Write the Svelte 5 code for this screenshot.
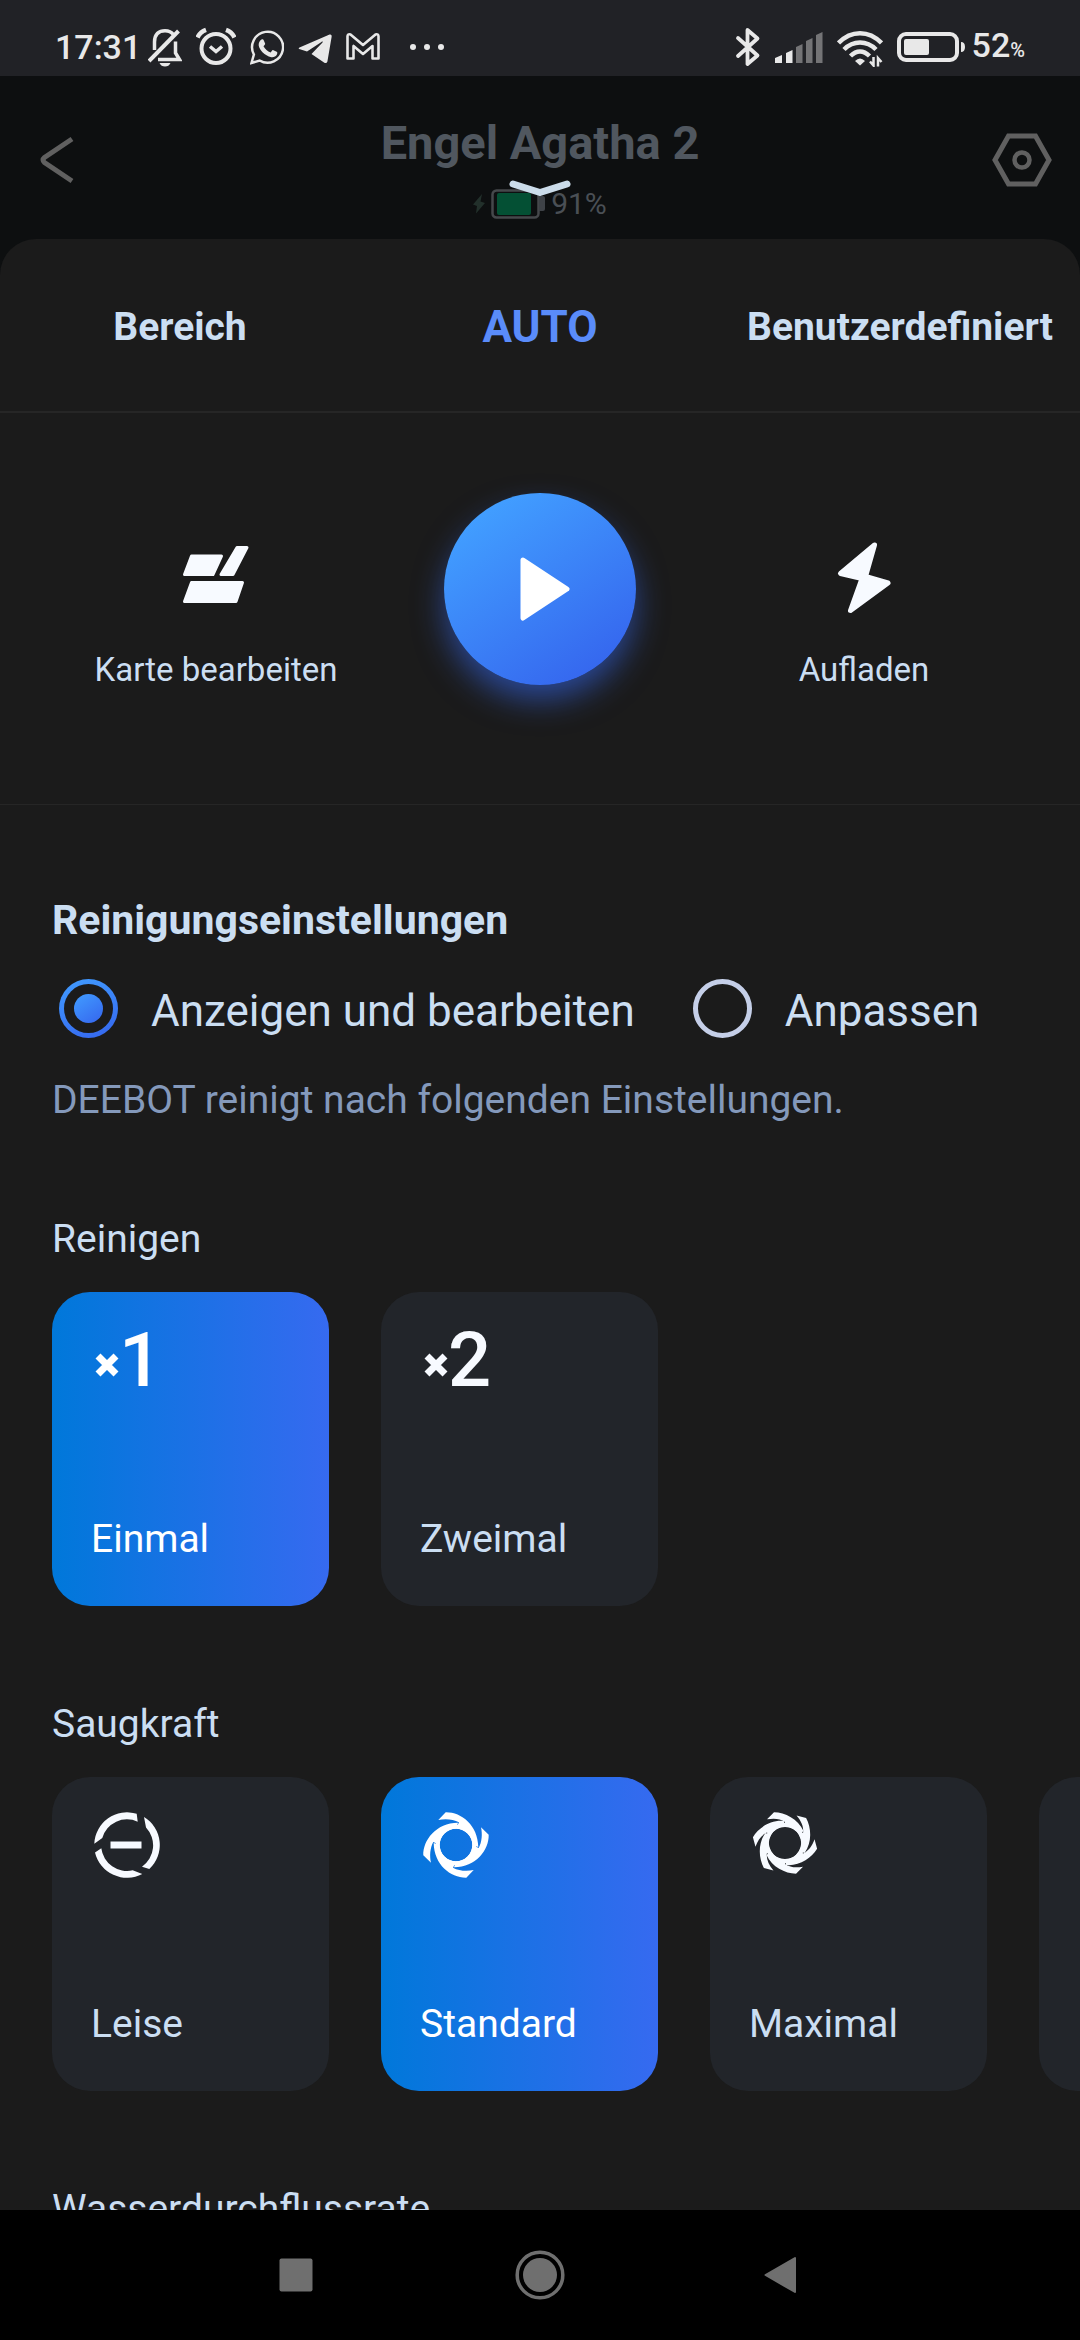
<script lang="ts">
  const tabs = [
    { id: 'area', label: 'Bereich' },
    { id: 'auto', label: 'AUTO' },
    { id: 'custom', label: 'Benutzerdefiniert' },
  ];

  const modes = [
    { id: 'edit', label: 'Anzeigen und bearbeiten' },
    { id: 'adapt', label: 'Anpassen' },
  ];

  const swirl4 = 'M-10.300 -32.700C5 -33 22 -20 22.300 2L16.300 0A16.300 16.300 0 0 0 0 -16.300L3 -22.700C-3 -26 -11 -26.500 -17.700 -25Z';
  const swirl6 = 'M-11 -30.700C0 -30.500 13 -24 18.500 -12L13.900 -8A16 16 0 0 0 0 -16L0 -21C-5 -24.500 -11 -25 -18 -23.700Z';

  const passes = [
    { id: 'once', label: 'Einmal', count: '1' },
    { id: 'twice', label: 'Zweimal', count: '2' },
  ];

  const suction = [
    { id: 'quiet', label: 'Leise', icon: 'quiet' },
    { id: 'standard', label: 'Standard', icon: 'swirl', blade: swirl4, angles: [0, 90, 180, 270], cy: 36 },
    { id: 'max', label: 'Maximal', icon: 'swirl', blade: swirl6, angles: [0, 60, 120, 180, 240, 300], cy: 34 },
  ];

  let activeTab = $state('auto');
  let mode = $state('edit');
  let pass = $state('once');
  let power = $state('standard');
</script>

<div class="screen">
  <div class="status">
    <div class="status-side">
      <span class="clock">17:31</span>
      <div class="notifications">
        <!-- muted bell -->
        <svg width="34" height="40" viewBox="0 0 34 40" fill="none" stroke="#e8e8e8" stroke-width="3.500">
          <path d="M6.500 23V15C6.500 7 11 3.700 17 3.700c3.500 0 6.500 1.300 8.300 3.800" />
          <path d="M1 34L30.500 4" stroke-width="4" />
          <path d="M10 32.500h21.500L27.500 26V14.500" />
          <path d="M11.500 36h11c-1 2.500-3 3.500-5.500 3.500s-4.500-1-5.500-3.500z" fill="#e8e8e8" stroke="none" />
        </svg>
        <!-- alarm clock -->
        <svg width="40" height="40" viewBox="0 0 40 40" fill="none" stroke="#e8e8e8" stroke-width="4">
          <circle cx="20" cy="21.500" r="14.500" />
          <path d="M14 19.500l6 5 6-5" stroke-width="3.500" />
          <path d="M1.500 10.500Q4 5 10 2.800M38.500 10.500Q36 5 30 2.800" stroke-width="4.500" />
        </svg>
        <!-- WhatsApp -->
        <svg width="34" height="40" viewBox="0 0 34 40">
          <path d="M1.500 36l2.400-8.500A15.500 15.500 0 1 1 9.600 33.500z" fill="none" stroke="#e8e8e8" stroke-width="2.500" />
          <path d="M11.500 12.500c1-.5 1.800-.3 2.200.7l1.400 3.200c.2.600-.1 1-1.600 2.800 1.600 3 4 5 7.200 6.200 1.700-2.200 2-2.500 2.700-2.200l3.300 1.600c.9.500.7 1.500.2 2.800-.9 2-3.500 3-5.600 2.600C14.500 28.500 9.500 23 8.700 18.500c-.3-2.500 1-5 2.800-6z" fill="#e8e8e8" />
        </svg>
        <!-- Telegram -->
        <svg width="34" height="40" viewBox="0 0 34 40" fill="#e8e8e8">
          <path d="M1.500 20.500L31 7.800c2-.8 3 .2 2.600 2.200L29.500 34c-.4 2-1.700 2.700-3.500 1.600L13.500 27l11-11.500c.7-.8-.1-1.200-1-.6L9 24.500l-7-2.200c-1.500-.5-1.800-1.200-.5-1.800z" />
        </svg>
        <!-- Gmail -->
        <svg width="34" height="40" viewBox="0 0 34 40" fill="none" stroke="#e8e8e8" stroke-width="2.600" stroke-linejoin="round">
          <path d="M1.500 9.500Q1.500 6.500 4.500 7.500L17 18 29.500 7.500Q32.500 6.500 32.500 9.500V31.500H26.500V19L17 27 7.500 19V31.500H1.500z" />
        </svg>
        <svg class="more" width="34" height="40" viewBox="0 0 34 40" fill="#e8e8e8">
          <circle cx="3" cy="20" r="3" /><circle cx="17" cy="20" r="3" /><circle cx="31" cy="20" r="3" />
        </svg>
      </div>
    </div>
    <div class="status-side">
      <div class="system">
        <!-- Bluetooth -->
        <svg width="26" height="40" viewBox="0 0 26 40" fill="none" stroke="#e8e8e8" stroke-width="3.800" stroke-linejoin="round" stroke-linecap="round">
          <path d="M3 11l19.500 17.500L12.500 37V3l10 8.500L3 29" />
        </svg>
        <!-- signal -->
        <svg width="48" height="40" viewBox="0 0 48 40" fill="#e8e8e8">
          <path d="M0 31l7-3v8H0zM11 26l6.500-3v13H11z" />
          <path d="M21 20l6.500-3v19H21zM31 14l6.500-3v25H31zM41 8l6.500-3v31H41z" fill="#747476" />
        </svg>
        <!-- wifi -->
        <svg width="46" height="40" viewBox="0 0 46 40" fill="none" stroke="#e8e8e8" stroke-width="4.500">
          <path d="M1.500 16Q11 6.200 23 6.200T44.500 16M7 22.500Q14 15.500 23 15.500T39 22.500M13.500 29Q18 24.500 23 24.500T32.500 29" />
          <path d="M18 34q5-5 10 0l-5 4.500z" fill="#e8e8e8" stroke="none" />
          <path d="M36.500 30v8.500l-3.500-4M41 39.500V31l3.500 4" stroke-width="2.500" />
        </svg>
        <!-- battery -->
        <svg width="68" height="40" viewBox="0 0 68 40">
          <rect x="2" y="7" width="58" height="26" rx="7" fill="none" stroke="#e8e8e8" stroke-width="4" />
          <rect x="7" y="12" width="25" height="16" rx="2" fill="#e8e8e8" />
          <path d="M64 15q4 0 4 5t-4 5z" fill="#e8e8e8" />
        </svg>
      </div>
      <span class="clock">52<small>%</small></span>
    </div>
  </div>

  <header class="header">
    <button class="back" aria-label="Zurück">
      <svg width="34" height="48" viewBox="0 0 34 48" fill="none" stroke="#606060" stroke-width="5">
        <path d="M32 3L4.500 21.500Q1.500 24 4.500 26.500L32 45" />
      </svg>
    </button>
    <div class="robot">
      <h1>Engel Agatha 2</h1>
      <div class="charge">
        <svg width="12" height="20" viewBox="0 0 12 20" fill="#22302b">
          <path d="M9 0L0 10.500l4 1.500L3 19.500 12 9 7.500 7.500z" />
        </svg>
        <svg width="54" height="30" viewBox="0 0 54 30">
          <rect x="1.500" y="1.500" width="46" height="27" rx="4" fill="none" stroke="#45484b" stroke-width="2.500" />
          <rect x="6" y="4" width="34" height="22" rx="2" fill="#045034" />
          <path d="M48 7h4q2 0 2 2v11q0 2-2 2h-4z" fill="#3e4247" />
        </svg>
        <span>91%</span>
      </div>
    </div>
    <button class="gear" aria-label="Einstellungen">
      <svg width="60" height="54" viewBox="0 0 60 54" fill="none" stroke="#606060">
        <path d="M3 27L16.500 3h27L57 27 43.500 51h-27z" stroke-width="5" />
        <circle cx="30" cy="27" r="7.500" stroke-width="4.500" />
      </svg>
    </button>
  </header>

  <main class="sheet">
    <svg class="handle" width="62" height="18" viewBox="0 0 62 18" fill="none" stroke="#cbdcea" stroke-width="7" stroke-linecap="round" stroke-linejoin="round">
      <path d="M4 4L31 12.500 58 4" />
    </svg>
    <div class="sheet-scroll">
      <nav class="tabs">
        {#each tabs as tab}
          <button class="tab" class:active={activeTab === tab.id} onclick={() => (activeTab = tab.id)}>{tab.label}</button>
        {/each}
      </nav>

      <section class="actions">
        <button class="action">
          <svg width="72" height="72" viewBox="0 0 72 72" fill="#f7faff" stroke="#f7faff" stroke-width="3" stroke-linejoin="round">
            <path d="M11.500 14h30L33 32.500H4.500z" />
            <path d="M57 5.500h10L53 32.500H41z" />
            <path d="M11.500 40.500h51L56 59.500H4.500z" />
          </svg>
          <span>Karte bearbeiten</span>
        </button>
        <button class="play" aria-label="Start">
          <svg width="50" height="64" viewBox="0 0 50 64" fill="#fff" stroke="#fff" stroke-width="5" stroke-linejoin="round">
            <path d="M3 3L47 32 3 61z" />
          </svg>
        </button>
        <button class="action">
          <svg width="72" height="72" viewBox="0 0 72 72" fill="#f7faff" stroke="#f7faff" stroke-width="5" stroke-linejoin="round">
            <path d="M46.500 3L12.500 31.500l21.500 5L22.500 68.500 60 41 37.500 34.500z" />
          </svg>
          <span>Aufladen</span>
        </button>
      </section>

      <section class="settings">
        <h2>Reinigungseinstellungen</h2>
        <div class="modes">
          {#each modes as item}
            <label class="mode">
              <input type="radio" name="mode" value={item.id} bind:group={mode} />
              <span>{item.label}</span>
            </label>
          {/each}
        </div>
        <p class="hint">DEEBOT reinigt nach folgenden Einstellungen.</p>

        <div class="group">
          <h3>Reinigen</h3>
          <div class="cards">
            {#each passes as item}
              <button class="card" class:selected={pass === item.id} aria-pressed={pass === item.id} onclick={() => (pass = item.id)}>
                <span class="count">
                  <svg width="24" height="24" viewBox="0 0 24 24" fill="none" stroke="currentColor" stroke-width="7">
                    <path d="M3 3l18 18M21 3L3 21" />
                  </svg>
                  {item.count}
                </span>
                <span class="card-label">{item.label}</span>
              </button>
            {/each}
          </div>
        </div>

        <div class="group">
          <h3>Saugkraft</h3>
          <div class="cards">
            {#each suction as item}
              <button class="card" class:selected={power === item.id} aria-pressed={power === item.id} onclick={() => (power = item.id)}>
                <svg width="72" height="72" viewBox="0 0 72 72" fill="currentColor">
                  {#if item.icon === 'quiet'}
                    <g transform="translate(36 36)">
                      <path d="M-32.700 -1.300A32.700 32.700 0 0 1 9.700 -31.200L10.700 -23.300A25.600 25.600 0 0 0 -24.700 -7z" />
                      <path d="M17 -28A32.700 32.700 0 0 1 22.300 24L15 21.700A26 26 0 0 0 19 -17.500z" />
                      <path d="M-32 7.500A32.700 32.700 0 0 0 15.300 28.900L5.700 25.300A26 26 0 0 1 -25.700 3.300z" />
                      <path d="M-16.500 -3.500h31v7h-31z" />
                    </g>
                  {:else}
                    <g transform="translate(36 {item.cy})">
                      <circle r="18.300" fill="none" stroke="currentColor" stroke-width="4" />
                      {#each item.angles ?? [] as angle}
                        <path d={item.blade} transform="rotate({angle})" />
                      {/each}
                    </g>
                  {/if}
                </svg>
                <span class="card-label">{item.label}</span>
              </button>
            {/each}
            <button class="card" aria-label="Saugkraft"></button>
          </div>
        </div>

        <div class="group">
          <h3>Wasserdurchflussrate</h3>
        </div>
      </section>
    </div>
  </main>

  <nav class="navbar">
    <button aria-label="Letzte Apps">
      <svg width="50" height="50" viewBox="0 0 50 50" fill="#6f6f6f"><rect x="8.500" y="8.500" width="33" height="33" rx="2" /></svg>
    </button>
    <button aria-label="Startbildschirm">
      <svg width="50" height="50" viewBox="0 0 50 50">
        <circle cx="25" cy="25" r="22.800" fill="none" stroke="#6f6f6f" stroke-width="3.500" />
        <circle cx="25" cy="25" r="17" fill="#6f6f6f" />
      </svg>
    </button>
    <button aria-label="Zurück">
      <svg width="50" height="50" viewBox="0 0 50 50" fill="#6f6f6f" stroke="#6f6f6f" stroke-width="2" stroke-linejoin="round"><path d="M36 8v34L6.500 25z" /></svg>
    </button>
  </nav>
</div>

<style>
  :global(body) {
    margin: 0;
    background: #0d0f10;
  }

  .screen {
    height: 100vh;
    display: flex;
    flex-direction: column;
    overflow: hidden;
    font-family: Roboto, "Liberation Sans", sans-serif;
    color: #cbdef2;
  }

  button {
    font: inherit;
    color: inherit;
    background: none;
    border: 0;
    padding: 0;
    cursor: pointer;
  }

  svg {
    display: block;
    flex: none;
  }

  h1,
  h2,
  h3,
  p {
    margin: 0;
  }

  .status {
    flex: none;
    box-sizing: border-box;
    height: 76px;
    padding: 18px 55px 0;
    background: #212226;
    color: #e8e8e8;
    display: flex;
    justify-content: space-between;
    align-items: center;
  }

  .status-side {
    display: flex;
    align-items: center;
    gap: 7px;
  }

  .notifications,
  .system {
    display: flex;
    gap: 14px;
  }

  .clock {
    font-size: 34px;
    font-weight: 500;
    line-height: 40px;
  }

  .clock small {
    font-size: 20px;
  }

  .more {
    margin-left: 16px;
  }

  .header {
    flex: none;
    display: grid;
    grid-template-columns: 1fr auto 1fr;
    align-items: center;
    padding: 5px 28px 0;
  }

  .back {
    justify-self: start;
    padding-left: 12px;
  }

  .gear {
    justify-self: end;
  }

  .robot {
    padding: 35px 0 17px;
    display: flex;
    flex-direction: column;
    align-items: center;
    gap: 16px;
  }

  h1 {
    font-size: 47px;
    line-height: 54px;
    font-weight: 700;
    color: #50575f;
  }

  .charge {
    display: flex;
    align-items: center;
    gap: 6px;
    font-size: 30px;
    line-height: 36px;
    color: #4a4f55;
  }

  .sheet {
    flex: 1;
    min-height: 0;
    position: relative;
    background: #1b1b1b;
    border-radius: 36px 36px 0 0;
  }

  .sheet-scroll {
    height: 100%;
    overflow: hidden;
  }

  .handle {
    position: absolute;
    top: -59px;
    left: 50%;
    transform: translateX(-50%);
  }

  .tabs {
    display: grid;
    grid-template-columns: repeat(3, minmax(0, 1fr));
    border-bottom: 2px solid #262626;
  }

  .tab {
    height: 172px;
    padding-top: 4px;
    font-size: 39px;
    font-weight: 700;
    white-space: nowrap;
  }

  .tab.active {
    font-size: 44px;
    color: #5a8cfa;
  }

  .actions {
    display: grid;
    grid-template-columns: 2fr 1fr 2fr;
    align-items: start;
    justify-items: center;
    padding: 80px 0 114px;
    border-bottom: 1px solid #262626;
  }

  .action {
    display: flex;
    flex-direction: column;
    align-items: center;
    gap: 36px;
    padding-top: 49px;
    font-size: 33px;
    line-height: 40px;
  }

  .play {
    width: 192px;
    height: 192px;
    padding-left: 10px;
    border-radius: 50%;
    background: linear-gradient(145deg, #419dff 15%, #3565ee 90%);
    box-shadow: 0 16px 32px -2px rgba(53, 105, 240, 0.6);
    display: flex;
    align-items: center;
    justify-content: center;
  }

  .settings {
    padding: 91px 0 0 52px;
  }

  h2 {
    font-size: 41px;
    line-height: 48px;
    font-weight: 700;
  }

  .modes {
    display: flex;
    gap: 58px;
    padding: 35px 0 33px 7px;
  }

  .mode {
    display: flex;
    align-items: flex-start;
    gap: 33px;
    font-size: 44px;
    line-height: 64px;
    white-space: nowrap;
  }

  .mode input {
    appearance: none;
    flex: none;
    box-sizing: border-box;
    width: 59px;
    height: 59px;
    margin: 0;
    border: 5px solid #c5cfe8;
    border-radius: 50%;
    display: grid;
    place-items: center;
  }

  .mode input:checked {
    border-color: transparent;
    background:
      linear-gradient(#1b1b1b, #1b1b1b) padding-box,
      linear-gradient(160deg, #419dff, #3565ee) border-box;
  }

  .mode input:checked::before {
    content: '';
    width: 29px;
    height: 29px;
    border-radius: 50%;
    background: linear-gradient(145deg, #419dff, #3565ee);
  }

  .hint {
    font-size: 39px;
    line-height: 48px;
    color: #8499bb;
    margin-bottom: 93px;
  }

  .group {
    margin-bottom: 96px;
  }

  h3 {
    font-size: 39px;
    line-height: 44px;
    font-weight: 400;
    margin-bottom: 31px;
  }

  .cards {
    display: flex;
    gap: 52px;
    overflow: hidden;
  }

  .card {
    flex: none;
    box-sizing: border-box;
    width: 277px;
    height: 314px;
    padding: 32px 39px 45px;
    border-radius: 38px;
    background: #22252a;
    color: #f7faff;
    display: flex;
    flex-direction: column;
    justify-content: space-between;
    align-items: flex-start;
  }

  .card.selected {
    background: linear-gradient(90deg, #0078da, #366af0);
    color: #fff;
  }

  .count {
    display: flex;
    align-items: center;
    padding-left: 4px;
    font-size: 76px;
    font-weight: 500;
    line-height: 72px;
  }

  .count svg {
    padding-top: 10px;
  }

  .card-label {
    font-size: 39px;
    line-height: 44px;
    color: #cbdef2;
  }

  .selected .card-label {
    color: #fff;
  }

  .navbar {
    flex: none;
    height: 130px;
    background: #000;
    display: flex;
    justify-content: center;
    align-items: center;
    gap: 194px;
  }
</style>
